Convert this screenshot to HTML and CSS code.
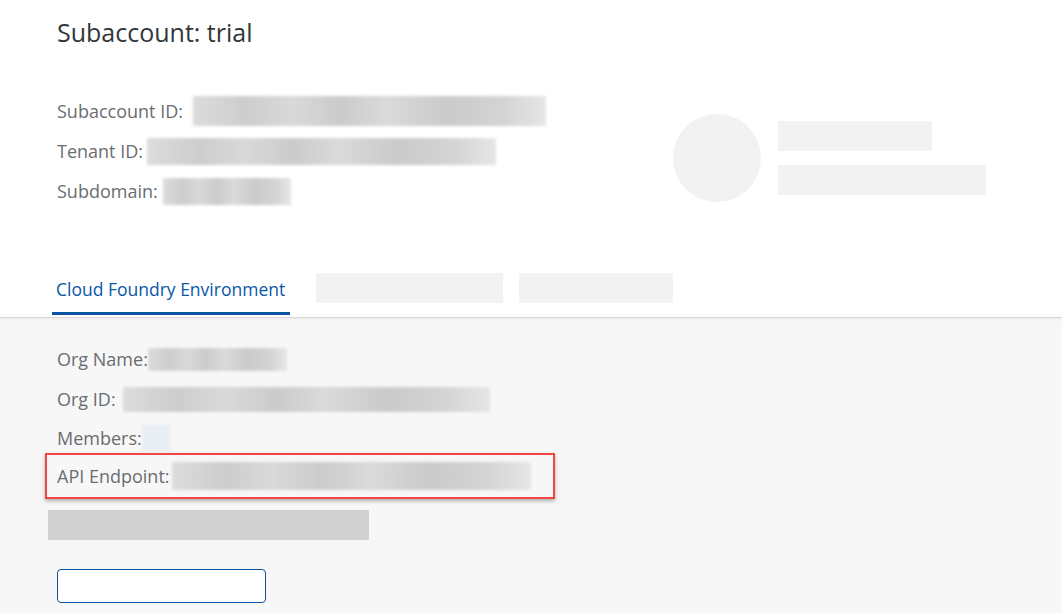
FILE: index.html
```html
<!DOCTYPE html>
<html>
<head>
<meta charset="utf-8">
<link rel="stylesheet" href="styles.css">
</head>
<body>
<div class="header">
  <h1 class="title">Subaccount: trial</h1>
  <div class="summary">
    <div class="info">
      <div class="row r1"><span class="label">Subaccount ID:</span><span class="blur b-sub"></span></div>
      <div class="row r2"><span class="label">Tenant ID:</span><span class="blur b-ten"></span></div>
      <div class="row r3"><span class="label">Subdomain:</span><span class="blur b-dom"></span></div>
    </div>
    <div class="profile">
      <div class="avatar"></div>
      <div class="lines">
        <div class="line l1"></div>
        <div class="line l2"></div>
      </div>
    </div>
  </div>
  <div class="tabs">
    <div class="tab active">Cloud Foundry Environment</div>
    <div class="tab ph ph1"></div>
    <div class="tab ph ph2"></div>
  </div>
</div>
<div class="content">
  <div class="row c1"><span class="label">Org Name:</span><span class="blur b-org"></span></div>
  <div class="row c2"><span class="label">Org ID:</span><span class="blur b-oid"></span></div>
  <div class="row c3"><span class="label">Members:</span><span class="blur b-mem"></span></div>
  <div class="row c4 highlight"><span class="label">API Endpoint:</span><span class="blur b-api"></span></div>
  <div class="graybar"></div>
  <button class="btn"></button>
</div>
</body>
</html>
```
FILE: styles.css
```css
* { box-sizing: border-box; }
html, body { margin: 0; padding: 0; }
body {
  font-family: "Open Sans", "Liberation Sans", Arial, sans-serif;
  background: #f7f7f7;
  width: 1062px;
  height: 613px;
  overflow: hidden;
}
.header {
  background: #ffffff;
  border-bottom: 1px solid #d9d9d9;
  box-shadow: 0 1px 2px rgba(0,0,0,0.06);
  padding-left: 52px;
  height: 318px;
  overflow: hidden;
}
.title {
  margin: 0;
  padding: 17px 0 0 5px;
  font-size: 25px;
  font-weight: normal;
  color: #32363a;
  line-height: 30px;
}
.summary {
  display: flex;
  margin-top: 44px;
}
.info {
  width: 621px;
  padding-left: 5px;
}
.row {
  display: flex;
  align-items: center;
  height: 40px;
}
.label {
  font-size: 18px;
  color: #6a6d70;
  white-space: nowrap;
}
.blur {
  display: block;
  background: linear-gradient(90deg, #dcdcdc 0%, #cdcdcd 15%, #d9d9d9 28%, #cbcbcb 42%, #dadada 55%, #cacaca 72%, #d4d4d4 88%, #e6e6e6 100%);
  filter: blur(1.5px);
}
.b-sub { margin-left: 10px; width: 353px; height: 30px; }
.b-ten { margin-left: 4px; width: 349px; height: 27px; }
.b-dom { margin-left: 5px; width: 128px; height: 27px; }
.profile {
  display: flex;
  align-items: flex-start;
  margin-top: 23px;
}
.avatar {
  width: 88px;
  height: 88px;
  border-radius: 50%;
  background: #f2f2f2;
}
.lines {
  margin-left: 17px;
  padding-top: 7px;
  display: flex;
  flex-direction: column;
  gap: 14px;
}
.line { background: #f2f2f2; height: 30px; }
.l1 { width: 154px; }
.l2 { width: 208px; }
.tabs {
  display: flex;
  align-items: flex-end;
  margin-top: 62px;
}
.tab.active {
  font-size: 17.5px;
  color: #0a57a6;
  padding: 0 4px;
  border-bottom: 3px solid #0854a0;
  width: 238px;
  height: 42px;
  line-height: 32px;
  white-space: nowrap;
}
.tab.ph {
  background: #f2f2f2;
  height: 30px;
  margin-bottom: 12px;
}
.ph1 { margin-left: 26px; width: 187px; }
.ph2 { margin-left: 16px; width: 154px; }
.content {
  padding: 21px 0 0 57px;
}
.b-org { margin-left: 0; width: 139px; height: 23px; }
.b-oid { margin-left: 7px; width: 367px; height: 25px; }
.c3 { height: 37px; }
.b-mem { margin-left: 0; width: 28px; height: 26px; background: #e9eef5; filter: blur(1.5px); }
.highlight {
  margin-left: -12px;
  width: 510px;
  height: 46px;
  border: 2px solid #f04545;
  padding-left: 10px;
  box-shadow: 0 2px 4px rgba(0,0,0,0.3);
  margin-top: -3px;
}
.b-api { margin-left: 2px; width: 359px; height: 28px; }
.graybar {
  margin-left: -9px;
  margin-top: 11px;
  width: 321px;
  height: 30px;
  background: #d1d1d1;
}
.btn {
  display: block;
  margin-top: 29px;
  width: 209px;
  height: 34px;
  background: #ffffff;
  border: 1px solid #0854a0;
  border-radius: 4px;
  padding: 0;
}
```
